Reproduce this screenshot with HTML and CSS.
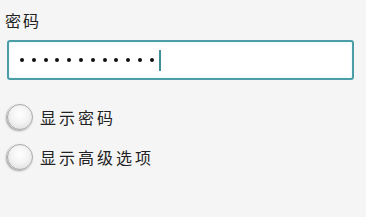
FILE: index.html
```html
<!DOCTYPE html>
<html lang="zh-CN">
<head>
    <meta charset="UTF-8">
    <title>密码</title>
    <link rel="stylesheet" href="styles.css">
</head>
<body>

<div class="form">
    <div class="label">密码</div>
    <div class="field">
        <span class="dot"></span><span class="dot"></span><span class="dot"></span>
        <span class="dot"></span><span class="dot"></span><span class="dot"></span>
        <span class="dot"></span><span class="dot"></span><span class="dot"></span>
        <span class="dot"></span><span class="dot"></span><span class="dot"></span>
        <span class="caret"></span>
    </div>

    <div class="option">
        <span class="radio"></span>
        <span class="option-text">显示密码</span>
    </div>
    <div class="option">
        <span class="radio"></span>
        <span class="option-text">显示高级选项</span>
    </div>
</div>

</body>
</html>
```

FILE: styles.css
```css
body {
    margin: 0;
    background-color: #f5f5f5;
    font-family: "Noto Sans CJK SC", "Noto Sans", sans-serif;
    color: #222;
}

.form {
    padding: 9px 12px 0 7px;
}

.label {
    font-size: 16px;
    line-height: 22px;
    letter-spacing: 2px;
    margin-left: -2px;
    height: 31px;
}

.field {
    display: flex;
    align-items: center;
    height: 36px;
    border: 2px solid #4b9ea8;
    border-radius: 3px;
    background-color: #fff;
    padding-left: 11px;
    box-shadow: inset 0 0 3px #d8f3f6;
}

.dot {
    width: 4px;
    height: 4px;
    border-radius: 50%;
    background-color: #111;
    margin-right: 7.8px;
}

.caret {
    width: 2px;
    height: 21px;
    background-color: #3f8f9a;
    margin-left: -3px;
}

.option {
    display: flex;
    align-items: center;
    height: 40px;
}

.field + .option {
    margin-top: 17px;
}

.radio {
    width: 24px;
    height: 24px;
    border-radius: 50%;
    border: 1px solid #a9a9a9;
    background: radial-gradient(circle at 50% 40%, #ffffff 0%, #f4f4f4 45%, #d6d6d6 100%);
    box-shadow: -1px 1px 2px rgba(0, 0, 0, 0.35);
}

.option-text {
    font-size: 16px;
    letter-spacing: 3px;
    margin-left: 7px;
}
```
